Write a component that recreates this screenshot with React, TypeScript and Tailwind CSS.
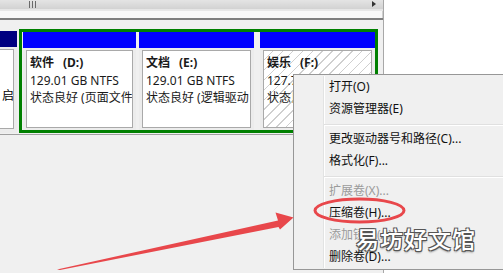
import React from "react";

const font = { fontFamily: '"Noto Sans", "Noto Sans CJK SC", sans-serif' };

type Disk = { name: string; letter: string; size: string; status: string; hatched?: boolean; w: string };

const disks: Disk[] = [
  { name: "软件", letter: "(D:)", size: "129.01 GB NTFS", status: "状态良好 (页面文件", w: "w-[113px]" },
  { name: "文档", letter: "(E:)", size: "129.01 GB NTFS", status: "状态良好 (逻辑驱动", w: "w-[115px]" },
  { name: "娱乐", letter: "(F:)", size: "127.7", status: "状态良", hatched: true, w: "w-[115px]" },
];

function DiskCell({ d }: { d: Disk }) {
  return (
    <div className={`${d.w} flex flex-col shrink-0`}>
      <div className="h-[16px] bg-[#0000ff]" />
      <div className="flex-1 bg-[#ececec] px-[3px] pt-[2px] pb-[2px] flex">
        <div
          className={`flex-1 border border-[#a9a9a9] pl-[3px] pt-[3px] overflow-hidden whitespace-nowrap text-[12px] leading-[17.5px] text-[#1a1a1a] ${
            d.hatched
              ? "bg-[repeating-linear-gradient(135deg,#ffffff_0px,#ffffff_6px,#cfcfcf_6px,#cfcfcf_7px)]"
              : "bg-white"
          }`}
        >
          <div className="font-bold">
            {d.name}
            <span className="ml-[9px]">{d.letter}</span>
          </div>
          <div>{d.size}</div>
          <div>{d.status}</div>
        </div>
      </div>
    </div>
  );
}

function MenuItem({ label, disabled }: { label: string; disabled?: boolean }) {
  return (
    <div className={`h-[22px] leading-[22px] pl-[5px] text-[12px] ${disabled ? "text-[#9b9b9b]" : "text-[#111]"}`}>
      {label}
    </div>
  );
}

function MenuSep() {
  return (
    <div className="h-[8px] pt-[4px]">
      <div className="h-px bg-[#e0e0e0]" />
      <div className="h-px bg-white" />
    </div>
  );
}

export default function App() {
  return (
    <div className="relative w-[503px] h-[273px] overflow-hidden bg-white flex" style={font}>
      {/* left pane */}
      <div className="w-[383px] shrink-0 flex flex-col bg-[#f0f0f0]">
        {/* horizontal scrollbar */}
        <div className="relative h-[9px] bg-gradient-to-b from-[#e4e4e4] to-[#d2d2d2]">
          <div className="absolute left-[29px] top-[1px] flex gap-[2px]">
            <div className="w-px h-[7px] bg-[#6a6a6a]" />
            <div className="w-px h-[7px] bg-[#6a6a6a]" />
            <div className="w-px h-[7px] bg-[#6a6a6a]" />
          </div>
          <div className="absolute left-[372px] top-[1px] w-0 h-0 border-y-[3px] border-y-transparent border-l-[4px] border-l-[#333]" />
        </div>
        <div className="h-[2px] bg-[#e6e6e6]" />
        <div className="h-[7px] bg-[#f7f7f7] border-r border-[#cfcfcf]" />
        <div className="h-[2px] bg-[#7d7d7d]" />
        <div className="h-[9px]" />

        {/* disk row */}
        <div className="flex h-[104px]">
          <div className="w-[17px] shrink-0 flex flex-col pt-[2px]">
            <div className="h-[16px] bg-[#000080]" />
            <div className="flex-1 bg-[#ececec] pt-[2px] pb-[4px] pr-[3px] flex">
              <div className="flex-1 bg-white border-y border-r border-[#a9a9a9] flex flex-col justify-end items-end pb-[24px] text-[12px] leading-[17px] overflow-hidden">
                <span className="-mr-[1px]">启</span>
              </div>
            </div>
          </div>
          <div className="w-[2px]" />
          <div className="w-[359px] shrink-0 border-[3px] border-[#008000] px-px flex gap-[3px]">
            <DiskCell d={disks[0]} />
            <DiskCell d={disks[1]} />
            <div className="w-px" />
            <DiskCell d={disks[2]} />
          </div>
        </div>
        <div className="h-px" />
        <div className="h-px bg-[#a0a0a0]" />
      </div>
      <div className="w-px bg-[#a8a8a8]" />
      <div className="flex-1 bg-white" />

      {/* context menu */}
      <div className="absolute left-[293px] top-[74px] w-[230px] border border-[#979797] bg-[#f0f0f0] py-px flex">
        <div className="w-[29px] shrink-0" />
        <div className="flex-1 border-l border-[#e2e3e3] [box-shadow:inset_1px_0_#ffffff]">
          <MenuItem label="打开(O)" />
          <MenuItem label="资源管理器(E)" />
          <MenuSep />
          <MenuItem label="更改驱动器号和路径(C)..." />
          <MenuItem label="格式化(F)..." />
          <MenuSep />
          <MenuItem label="扩展卷(X)..." disabled />
          <MenuItem label="压缩卷(H)..." />
          <MenuItem label="添加镜像(A)..." disabled />
          <MenuItem label="删除卷(D)..." />
        </div>
      </div>

      {/* annotation: ellipse + arrow */}
      <svg className="absolute left-0 top-0" width="503" height="273" viewBox="0 0 503 273">
        <ellipse cx="359.5" cy="210.5" rx="44.5" ry="11.5" fill="none" stroke="#e8474b" strokeWidth="3" />
        <polygon
          points="57,269.5 278,220.5 275.5,212.5 293.5,217.5 280,229.5 278.5,227 60,270"
          fill="#e8474b"
        />
      </svg>

      {/* watermark */}
      <div
        className="absolute left-[356px] top-[224px] text-[23px] leading-[28px] font-medium text-white tracking-[1px] [text-shadow:-1px_-1px_0_#555,1px_-1px_0_#555,-1px_1px_0_#555,1px_1px_0_#555,0_2px_2px_rgba(0,0,0,0.4)]"
        style={{ fontFamily: '"Noto Sans CJK SC", sans-serif' }}
      >
        易坊好文馆
      </div>
    </div>
  );
}
